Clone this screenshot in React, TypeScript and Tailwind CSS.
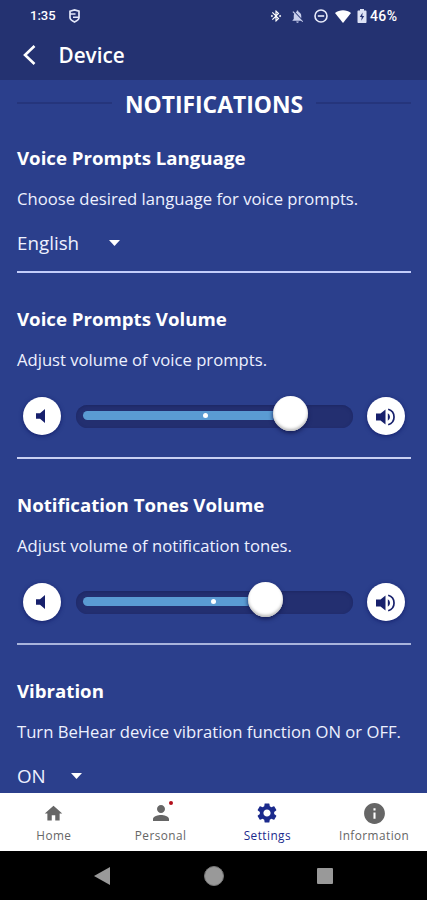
import type { ReactNode } from "react";
import {
  MdBluetoothConnected,
  MdHome,
  MdInfo,
  MdNotificationsOff,
  MdPerson,
  MdSettings,
} from "react-icons/md";

function StatusBar() {
  return (
    <div className="relative flex h-8 items-center pl-[30px] pr-[29px] text-white">
      <span className="w-[26px] whitespace-nowrap font-[Roboto,sans-serif] text-[13px] font-medium leading-8">
        1:35
      </span>
      <svg className="ml-[13px]" width="11" height="14" viewBox="0 0 11 14" fill="none" stroke="#e4e8fa" strokeWidth="1.7">
        <path d="M1 2.2 5.5 1 10 2.2v6.3c0 2-2 3.4-4.500 4.500C3 11.900 1 10.500 1 8.500z" />
        <path d="M1 5h5.500M4 8.200h6" strokeWidth="1.400" />
      </svg>
      <div className="ml-auto flex items-center">
        <MdBluetoothConnected className="mr-[7px] size-[14px]" />
        <MdNotificationsOff className="mr-[9px] size-[15px] text-[#c9d0ee]" />
        <svg className="mr-[7px]" width="14" height="14" viewBox="0 0 14 14" fill="none" stroke="#e9ecfb" strokeWidth="1.600">
          <circle cx="7" cy="7" r="6" />
          <path d="M3.800 7h6.400" />
        </svg>
        <svg className="mr-[6px]" width="16" height="13" viewBox="0 0 16 13" fill="#fff">
          <path d="M0 3C4.500-.8 11.500-.8 16 3L8 13z" />
        </svg>
        <svg className="mr-[3px]" width="10" height="14" viewBox="0 0 10 14" fill="#dde2f5">
          <path d="M3 0h4v1.500h1.500c.6 0 1 .4 1 1V13c0 .6-.4 1-1 1h-7c-.6 0-1-.4-1-1V2.500c0-.6.4-1 1-1H3z" />
          <path d="M5.600 3.500 2.800 8h1.900l-.4 3.700L7.200 7H5.300z" fill="#243271" />
        </svg>
        <span className="w-[28px] whitespace-nowrap font-[Roboto,sans-serif] text-[14px] font-medium leading-8 tracking-[0.4px]">
          46%
        </span>
      </div>
    </div>
  );
}

function Header() {
  return (
    <header className="h-20 shrink-0 bg-[#243271]">
      <StatusBar />
      <div className="flex h-[46px] items-center pl-[22px]">
        <svg width="15" height="22" viewBox="0 0 15 22" fill="none" stroke="#fff" strokeWidth="2.600">
          <path d="M12.500 2 3 11l9.500 9" />
        </svg>
        <h1 className="ml-[21.500px] text-[20.700px] font-semibold leading-[46px] text-white">Device</h1>
      </div>
    </header>
  );
}

function Heading({ children }: { children: ReactNode }) {
  return <h3 className="h-6 whitespace-nowrap text-[18.650px] font-bold leading-6 text-white">{children}</h3>;
}

function Description({ children }: { children: ReactNode }) {
  return (
    <p className="mt-4 h-[25px] whitespace-nowrap text-[16.650px] leading-[25px] text-[#eef1ff]">{children}</p>
  );
}

function Picker({ value, gap }: { value: string; gap: string }) {
  return (
    <div className={`mt-5 flex h-6 items-center text-[18.800px] leading-6 text-[#eef1ff] ${gap}`}>
      <span>{value}</span>
      <svg className="-mt-px" width="11" height="6" viewBox="0 0 11 6" fill="#fff">
        <path d="M0 0h11L5.500 6z" />
      </svg>
    </div>
  );
}

function RoundButton({ label, children }: { label: string; children: ReactNode }) {
  return (
    <button
      aria-label={label}
      className="flex size-[38px] shrink-0 items-center justify-center rounded-full bg-white text-[#17206c] shadow-[0_1px_4px_#14206c]"
    >
      {children}
    </button>
  );
}

function VolumeSlider({ fill, mark }: { fill: number; mark: number }) {
  return (
    <div className="mt-[25px] flex h-[38px] items-center justify-between px-[6px]">
      <RoundButton label="Quieter">
        <svg className="-ml-[3px]" width="9" height="14" viewBox="0 0 9 14" fill="currentColor">
          <path d="M0 4.200h4L9 0v14L4 9.800H0z" />
        </svg>
      </RoundButton>
      <div className="relative flex h-[23px] w-[277px] rounded-full bg-[#232f70] px-[7px] pt-[6px] shadow-[inset_0_1px_3px_#1d2764]">
        <div className="h-[9px] rounded-l-full bg-[#5a9bd3]" style={{ width: fill }} />
        <span
          className="absolute top-[8.500px] size-[5px] rounded-full bg-white"
          style={{ left: mark }}
        />
        <span
          className="absolute -top-[9px] size-[35px] rounded-full bg-white shadow-[inset_0_-2px_3px_#bbb,0_2px_4px_#141c55]"
          style={{ left: fill - 3 }}
        />
      </div>
      <RoundButton label="Louder">
        <svg className="mt-px" width="20" height="18" viewBox="0 0 20 18" fill="currentColor">
          <path d="M0 5.600h4.500L9.500 1.500v15L4.500 12.400H0z" />
          <path d="M11.800 5.300a4.200 4.200 0 0 1 0 7.400z" />
          <path d="M12.200 1.300a8 8 0 0 1 0 15.400" fill="none" stroke="currentColor" strokeWidth="1.700" />
        </svg>
      </RoundButton>
    </div>
  );
}

function Divider({ className }: { className: string }) {
  return <hr className={`h-[2px] border-0 ${className}`} />;
}

function Tab({ label, active, icon }: { label: string; active?: boolean; icon: ReactNode }) {
  return (
    <button
      className={`flex flex-1 flex-col items-center pl-px pt-2 ${active ? "text-[#1b2a8c]" : "text-[#666]"}`}
    >
      <span className="relative flex h-6 items-center justify-center">{icon}</span>
      <span className="mt-px whitespace-nowrap text-[11.800px] leading-[18px] tracking-[0.450px]">{label}</span>
    </button>
  );
}

export default function App() {
  return (
    <div className="flex h-[900px] w-full flex-col overflow-hidden bg-[#2b3f8c] font-['Open_Sans','Noto_Sans',sans-serif]">
      <Header />
      <main className="min-h-0 flex-1 overflow-hidden pl-[17px] pr-4">
        <div className="flex h-[49px] items-center gap-[13px]">
          <span className="mt-[-3px] h-[2px] flex-1 bg-[#25357c]" />
          <h2 className="whitespace-nowrap text-[22.850px] font-bold leading-[49px] text-white">
            NOTIFICATIONS
          </h2>
          <span className="mt-[-3px] h-[2px] flex-1 bg-[#25357c]" />
        </div>
        <section className="pt-[17px]">
          <Heading>Voice Prompts Language</Heading>
          <Description>Choose desired language for voice prompts.</Description>
          <Picker value="English" gap="gap-[30px]" />
          <Divider className="mt-4 bg-[#c3cdfa]" />
        </section>
        <section className="pt-[34px]">
          <Heading>Voice Prompts Volume</Heading>
          <Description>Adjust volume of voice prompts.</Description>
          <VolumeSlider fill={200} mark={127} />
          <Divider className="mt-[22px] bg-[#c9d0f2]" />
        </section>
        <section className="pt-[34px]">
          <Heading>Notification Tones Volume</Heading>
          <Description>Adjust volume of notification tones.</Description>
          <VolumeSlider fill={175} mark={135.5} />
          <Divider className="mt-[22px] bg-[#a9b4dc]" />
        </section>
        <section className="pt-[34px]">
          <Heading>Vibration</Heading>
          <Description>Turn BeHear device vibration function ON or OFF.</Description>
          <Picker value="ON" gap="gap-[25px]" />
        </section>
      </main>
      <nav className="flex h-[58px] shrink-0 bg-white">
        <Tab label="Home" icon={<MdHome className="size-[21px]" />} />
        <Tab
          label="Personal"
          icon={
            <>
              <MdPerson className="size-[24px]" />
              <i className="absolute right-0 top-0 size-1 rounded-full bg-[#b30f1b]" />
            </>
          }
        />
        <Tab label="Settings" active icon={<MdSettings className="size-6" />} />
        <Tab label="Information" icon={<MdInfo className="size-[25px]" />} />
      </nav>
      <div className="flex h-[49px] shrink-0 items-center bg-black pl-[94px]">
        <svg width="16" height="18" viewBox="0 0 16 18" fill="#999">
          <path d="M16 0v18L0 9z" />
        </svg>
        <span className="ml-[94px] size-5 rounded-full border border-[#777] bg-[#999]" />
        <span className="ml-[93px] size-4 rounded-[1px] bg-[#999]" />
      </div>
    </div>
  );
}
